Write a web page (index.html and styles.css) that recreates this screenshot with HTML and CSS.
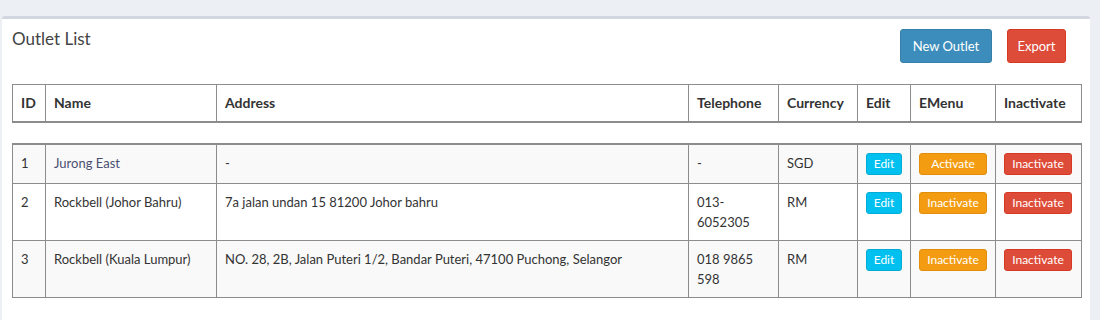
FILE: index.html
```html
<!DOCTYPE html>
<html lang="en">
<head>
<title>Outlet List</title>
<meta name="viewport" content="width=device-width, initial-scale=1.0">
<link rel="stylesheet" href="styles.css">
</head>
<body>
<div class="box">
  <div class="box-header">
    <h3 class="box-title">Outlet List</h3>
    <div class="box-tools">
      <button class="btn btn-primary">New Outlet</button>
      <button class="btn btn-danger">Export</button>
    </div>
  </div>

  <div class="box-body">
    <!-- header table (scroll head) -->
    <table class="table head-table">
      <colgroup>
        <col class="c-id"><col class="c-name"><col class="c-addr"><col class="c-tel">
        <col class="c-cur"><col class="c-edit"><col class="c-menu"><col class="c-inact">
      </colgroup>
      <thead>
        <tr>
          <th>ID</th>
          <th>Name</th>
          <th>Address</th>
          <th>Telephone</th>
          <th>Currency</th>
          <th>Edit</th>
          <th>EMenu</th>
          <th>Inactivate</th>
        </tr>
      </thead>
    </table>

    <!-- body table (scroll body) -->
    <table class="table body-table">
      <colgroup>
        <col class="c-id"><col class="c-name"><col class="c-addr"><col class="c-tel">
        <col class="c-cur"><col class="c-edit"><col class="c-menu"><col class="c-inact">
      </colgroup>
      <tbody>
        <tr class="odd first">
          <td>1</td>
          <td>Jurong East</td>
          <td>-</td>
          <td>-</td>
          <td>SGD</td>
          <td><button class="btn-xs btn-info">Edit</button></td>
          <td><button class="btn-xs btn-warning">Activate</button></td>
          <td><button class="btn-xs btn-red">Inactivate</button></td>
        </tr>
        <tr class="even">
          <td>2</td>
          <td>Rockbell (Johor Bahru)</td>
          <td>7a jalan undan 15 81200 Johor bahru</td>
          <td>013-<br>6052305</td>
          <td>RM</td>
          <td><button class="btn-xs btn-info">Edit</button></td>
          <td><button class="btn-xs btn-warning">Inactivate</button></td>
          <td><button class="btn-xs btn-red">Inactivate</button></td>
        </tr>
        <tr class="odd">
          <td>3</td>
          <td>Rockbell (Kuala Lumpur)</td>
          <td>NO. 28, 2B, Jalan Puteri 1/2, Bandar Puteri, 47100 Puchong, Selangor</td>
          <td>018 9865<br>598</td>
          <td>RM</td>
          <td><button class="btn-xs btn-info">Edit</button></td>
          <td><button class="btn-xs btn-warning">Inactivate</button></td>
          <td><button class="btn-xs btn-red">Inactivate</button></td>
        </tr>
      </tbody>
    </table>
  </div>
</div>
</body>
</html>
```

FILE: styles.css
```css
* {
  box-sizing: border-box;
}

body {
  margin: 0;
  background-color: #ecf0f5;
  color: #333;
  font-family: Lato, "Liberation Sans", sans-serif;
  font-size: 13px;
  line-height: 20px;
}

.box {
  margin: 16px 0 0 2px;
  width: 1088px;
  min-height: 304px;
  background-color: #fff;
  border-top: 3px solid #d2d6de;
  border-radius: 3px 3px 0 0;
}

.box-header {
  display: flex;
  justify-content: space-between;
  align-items: flex-start;
  padding: 10px 24px 0 10px;
}

.box-title {
  margin: 0;
  font-size: 17px;
  font-weight: normal;
  line-height: 20px;
  color: #444;
}

.box-tools {
  display: flex;
  gap: 15px;
}

.btn {
  font-family: inherit;
  font-size: 13px;
  line-height: 20px;
  padding: 6px 0;
  text-align: center;
  white-space: nowrap;
  border: 1px solid transparent;
  border-radius: 3px;
  color: #fff;
  cursor: pointer;
}

.btn-primary {
  width: 92px;
  background-color: #3c8dbc;
  border-color: #367fa9;
}

.btn-danger {
  width: 59px;
  background-color: #dd4b39;
  border-color: #d73925;
}

.box-body {
  padding: 21px 10px 10px 10px;
}

.table {
  width: 1069px;
  table-layout: fixed;
  border-collapse: collapse;
}

.table th,
.table td {
  border: 1px solid #8c8c8c;
  padding: 8px;
  text-align: left;
  vertical-align: top;
}

.table th {
  font-size: 14px;
  font-weight: bold;
  border-bottom-width: 2px;
}

.c-id { width: 33px; }
.c-name { width: 171px; }
.c-addr { width: 472px; }
.c-tel { width: 90px; }
.c-cur { width: 79px; }
.c-edit { width: 53px; }
.c-menu { width: 85px; }
.c-inact { width: 86px; }

.body-table {
  margin-top: 20px;
}

.body-table tr.first td {
  border-top-width: 2px;
}

.body-table tr.odd {
  background-color: #f9f9f9;
}

.body-table tr.first td:nth-child(2) {
  color: #4a4f72;
}

.btn-xs {
  font-family: inherit;
  font-size: 12px;
  line-height: 18px;
  padding: 1px 0;
  text-align: center;
  white-space: nowrap;
  border: 1px solid transparent;
  border-radius: 3px;
  color: #fff;
  cursor: pointer;
}

.btn-info {
  width: 36px;
  background-color: #00c0ef;
  border-color: #00acd6;
}

.btn-warning {
  width: 68px;
  background-color: #f39c12;
  border-color: #e08e0b;
}

.btn-red {
  width: 68px;
  background-color: #dd4b39;
  border-color: #d73925;
}
```
